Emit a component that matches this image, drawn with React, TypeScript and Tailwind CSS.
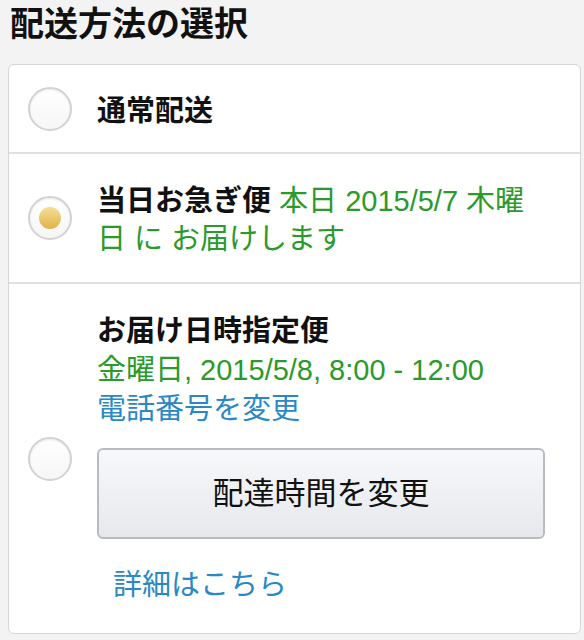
import React from "react";

// 配送方法の選択

function Radio({ checked = false }: { checked?: boolean }) {
  return (
    <div className="w-[44px] h-[44px] shrink-0 rounded-full border-2 border-[#d2d2d2] bg-gradient-to-b from-white to-[#f6f6f6] flex items-center justify-center shadow-[inset_0_1px_2px_rgba(0,0,0,0.08)]">
      {checked && (
        <div className="w-[22px] h-[22px] rounded-full bg-gradient-to-b from-[#f6df95] to-[#e0b245]" />
      )}
    </div>
  );
}

export default function App() {
  return (
    <div
      className="min-h-[640px] bg-[#f3f3f3] pt-[2px] pb-2 text-[#111]"
      style={{ fontFamily: '"Liberation Sans", "Noto Sans CJK JP", sans-serif' }}
    >
      <h1 className="pl-[10px] font-bold text-[34px] leading-[44px] text-[#111]">配送方法の選択</h1>
      <div className="mt-[18px] ml-[8px] mr-[3px] bg-white border border-[#d6d6d6] rounded-[6px] overflow-hidden">
        <div className="flex items-center h-[89px] pl-[19px] gap-[25px] border-b-2 border-[#e0e0e0]">
          <Radio />
          <span className="pt-[4px] font-bold text-[29px] leading-[38px]">通常配送</span>
        </div>

        <div className="flex items-center h-[130px] pl-[19px] pr-[40px] gap-[25px] border-b-2 border-[#e0e0e0]">
          <Radio checked />
          <p className="pt-[4px] text-[29px] leading-[38px]">
            <span className="font-bold">当日お急ぎ便</span>{" "}
            <span className="text-[#2a9a2a]">本日 2015/5/7 木曜日 に お届けします</span>
          </p>
        </div>

        <div className="flex items-center pl-[19px] pr-[35px] gap-[25px]">
          <Radio />
          <div className="flex-1 flex flex-col pt-[28px] pb-[28px] text-[29px] leading-[39px]">
            <span className="font-bold">お届け日時指定便</span>
            <span className="text-[#2a9a2a]">金曜日, 2015/5/8, 8:00 - 12:00</span>
            <a className="text-[#2a88c4]">電話番号を変更</a>
            <button className="mt-[19px] h-[91px] rounded-[6px] border-2 border-[#b8bcc2] bg-gradient-to-b from-[#f7f8fa] to-[#e6e8ec] text-[31px] text-[#111]">
              配達時間を変更
            </button>
            <a className="mt-[27px] pl-[16px] text-[#2a88c4]">詳細はこちら</a>
          </div>
        </div>
      </div>
    </div>
  );
}
